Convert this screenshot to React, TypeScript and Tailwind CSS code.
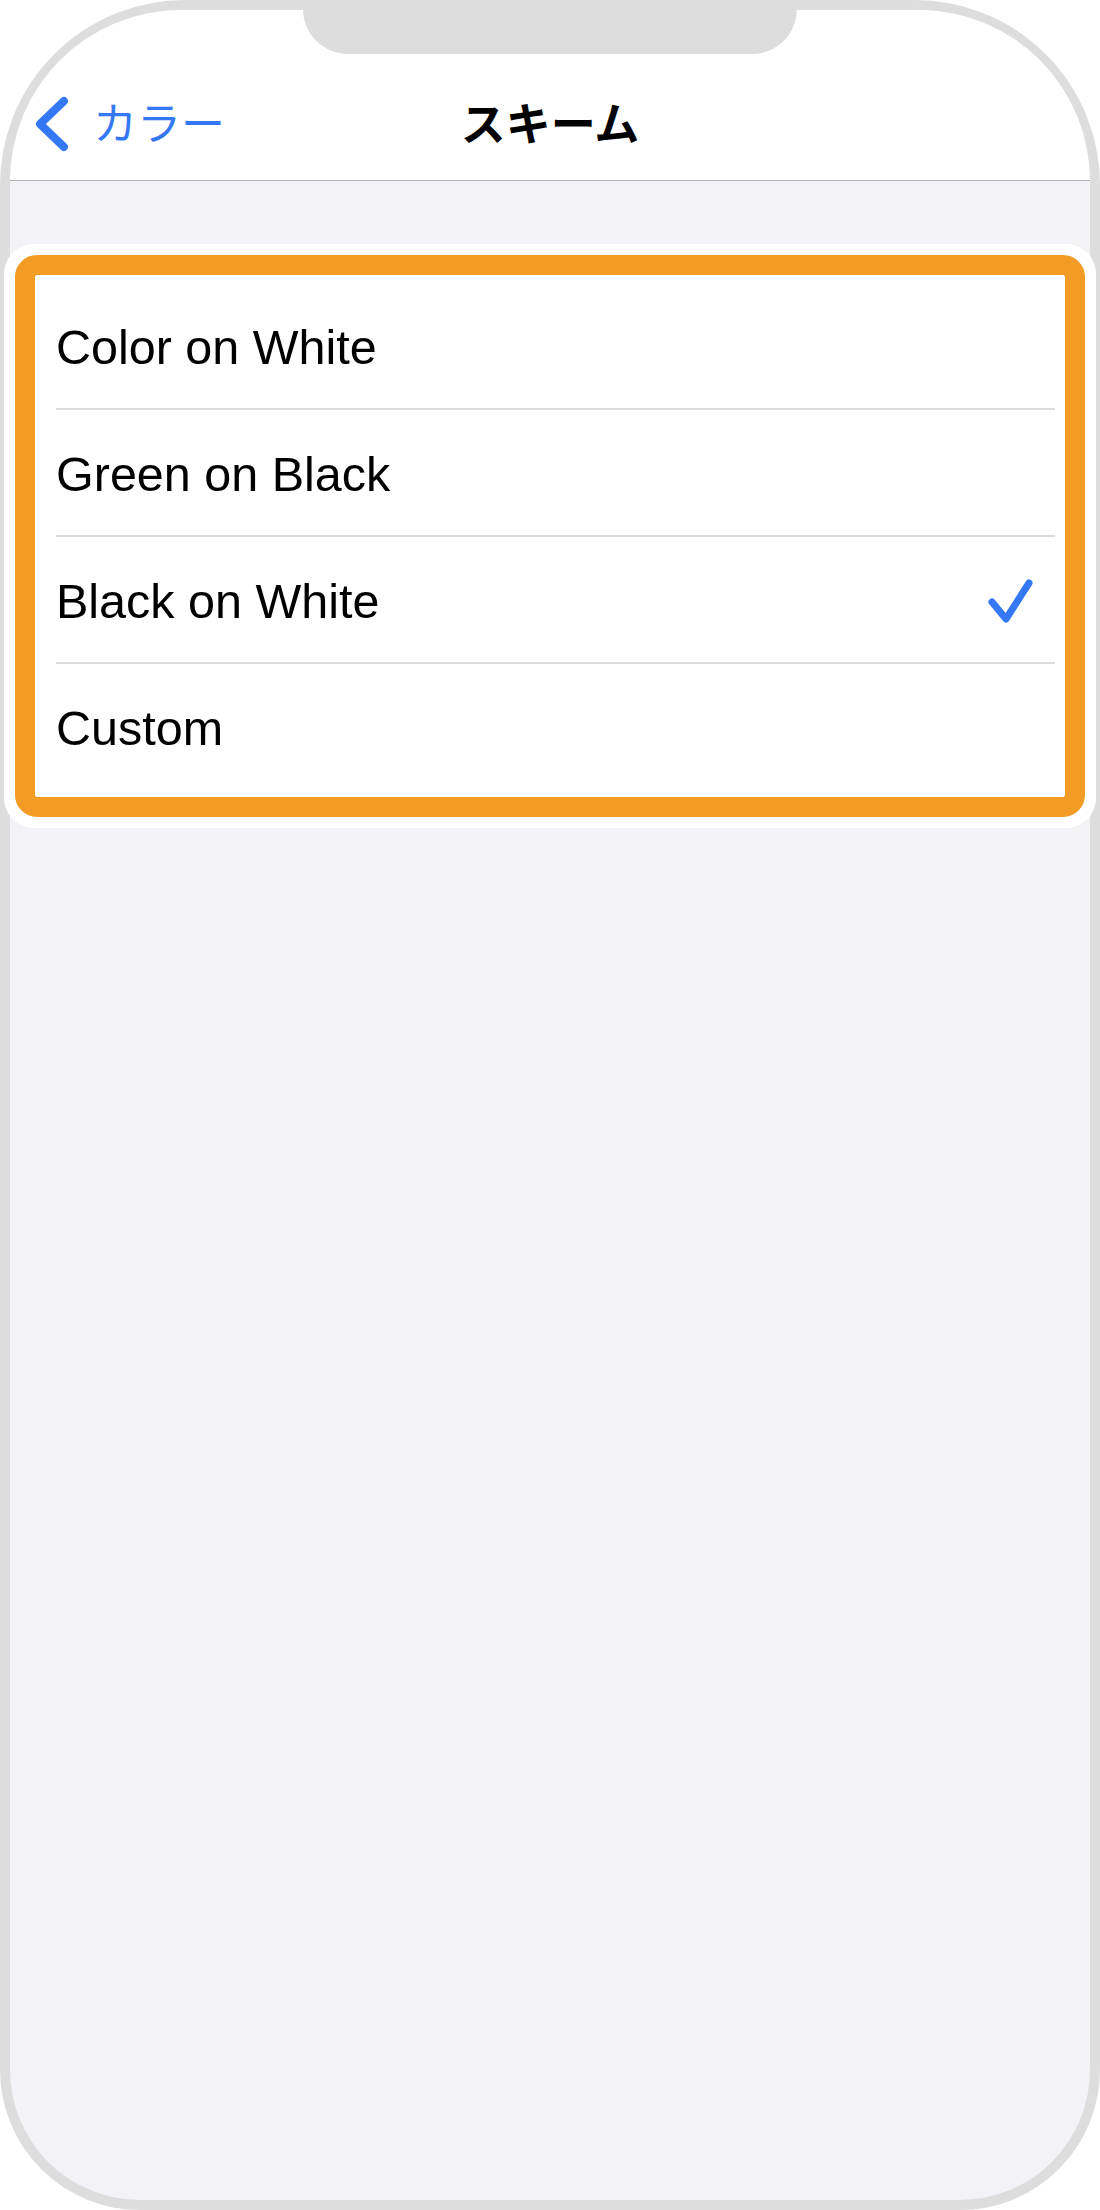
import React from "react";

const rows = [
  { label: "Color on White", checked: false },
  { label: "Green on Black", checked: false },
  { label: "Black on White", checked: true },
  { label: "Custom", checked: false },
];

function Chevron() {
  return (
    <svg width="40" height="60" viewBox="0 0 40 60" className="shrink-0">
      <path
        d="M34 7 L10 30 L34 53"
        fill="none"
        stroke="#3478f6"
        strokeWidth="8"
        strokeLinecap="round"
        strokeLinejoin="round"
      />
    </svg>
  );
}

function Check() {
  return (
    <svg width="48" height="48" viewBox="0 0 48 48" className="shrink-0">
      <path
        d="M6 24 L20 41 L43 5"
        fill="none"
        stroke="#3478f6"
        strokeWidth="7"
        strokeLinecap="round"
        strokeLinejoin="round"
      />
    </svg>
  );
}

export default function App() {
  return (
    <div className="w-[1100px] h-[2210px] bg-white">
      <div className="relative w-[1100px] h-[2210px] border-[10px] border-[#dddddd] rounded-t-[185px] rounded-b-[140px] bg-[#f2f2f7]">
        {/* notch */}
        <div className="absolute left-[293px] top-[-10px] w-[494px] h-[54px] bg-[#dddddd] rounded-b-[45px] z-10" />

        {/* nav bar */}
        <div className="h-[171px] bg-white rounded-t-[175px] border-b border-[#b4b4b8] pt-[78px]">
          <div className="grid grid-cols-[1fr_auto_1fr] items-center h-[54px]">
            <div className="flex items-center gap-[23px] pl-[20px] text-[#3478f6] text-[44px] leading-none font-['Noto_Sans_CJK_JP',sans-serif]">
              <div className="mt-[6px]">
                <Chevron />
              </div>
              <span>カラー</span>
            </div>
            <div className="text-black text-[45px] font-bold leading-none font-['Noto_Sans_CJK_JP',sans-serif]">
              スキーム
            </div>
            <div />
          </div>
        </div>

        {/* highlighted list */}
        <div className="-mx-[6px] mt-[63px] rounded-[30px] bg-white p-[11px]">
          <div className="rounded-[22px] border-[20px] border-[#f39c25] bg-white py-[8px]">
            {rows.map((row, i) => (
              <div key={row.label}>
                <div className="flex items-center justify-between h-[125px] pl-[21px] pr-[31px] pt-[4px]">
                  <span className="text-[48.5px] leading-none text-black font-['Liberation_Sans',Arial,sans-serif]">
                    {row.label}
                  </span>
                  {row.checked && <Check />}
                </div>
                {i < rows.length - 1 && (
                  <div className="h-[2px] ml-[21px] mr-[10px] bg-[#dcdcdf]" />
                )}
              </div>
            ))}
          </div>
        </div>
      </div>
    </div>
  );
}
